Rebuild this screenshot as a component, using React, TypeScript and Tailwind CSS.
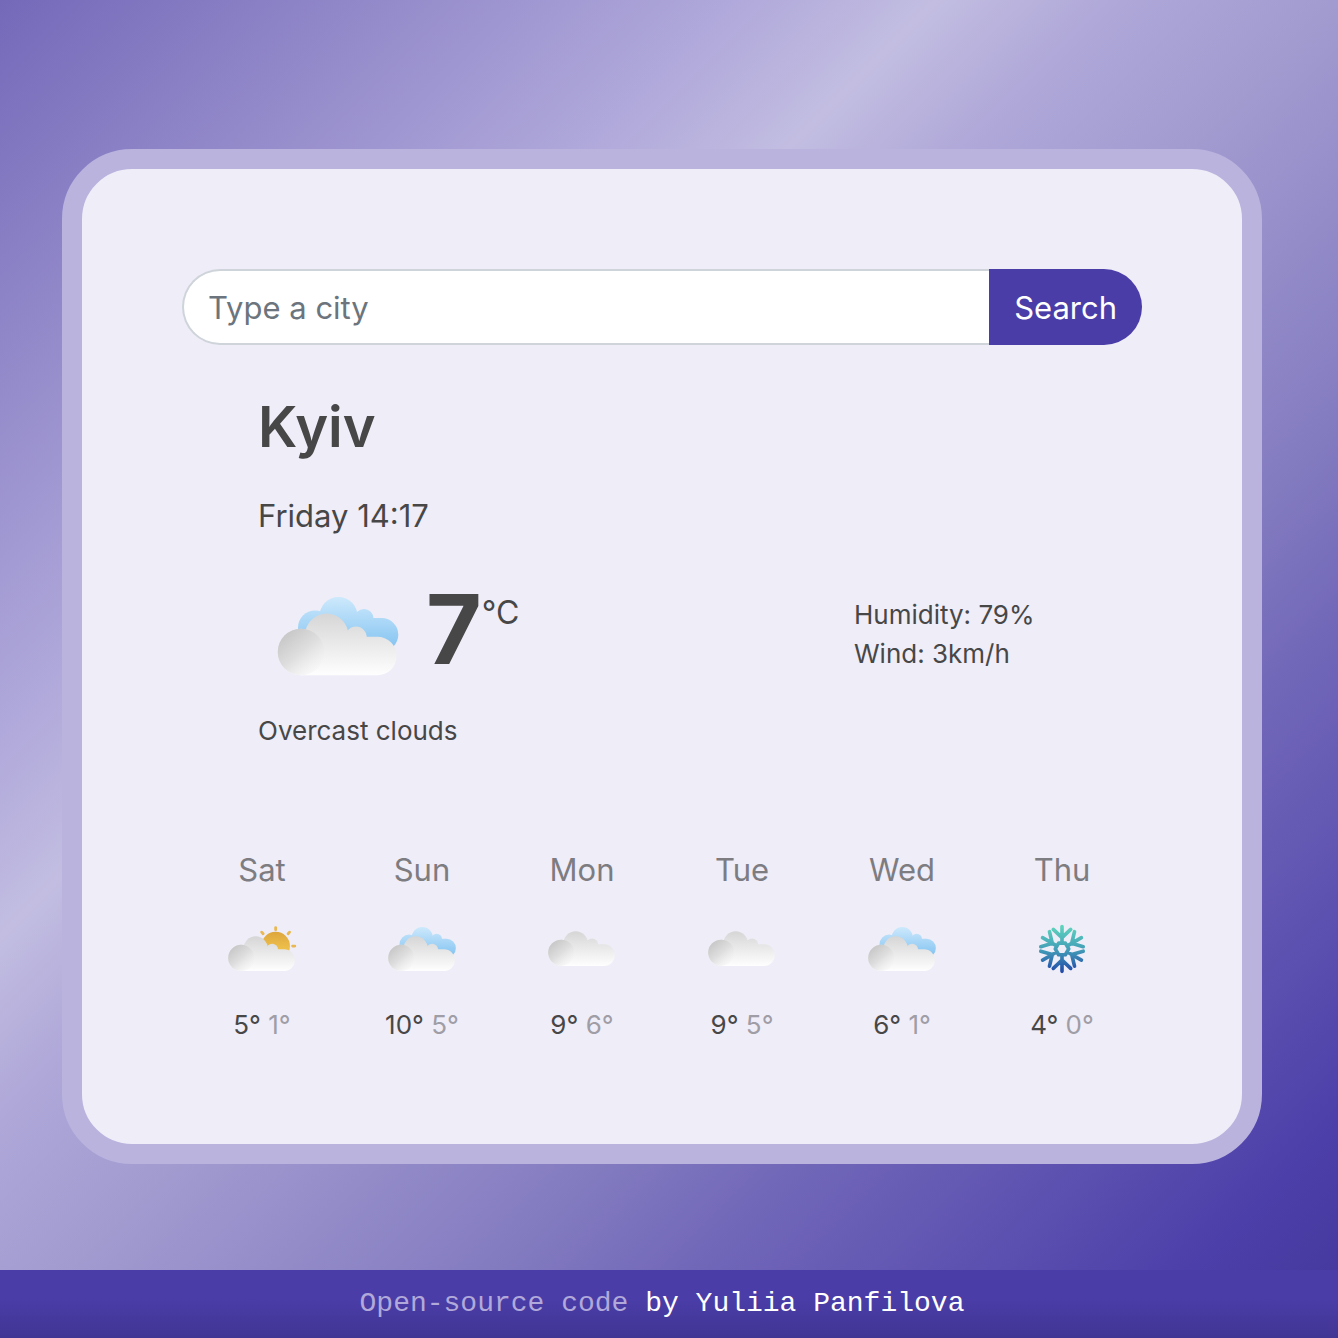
import { useId } from "react";

type IconKind = "overcast" | "cloudy" | "partly" | "snow";

function GreyCloud({ id, dy = 0 }: { id: string; dy?: number }) {
  return (
    <g transform={`translate(0 ${dy})`}>
      <defs>
        <linearGradient id={`${id}g`} gradientUnits="userSpaceOnUse" x1="0" y1="58" x2="0" y2="119">
          <stop offset="0" stopColor="#d6d6d6" />
          <stop offset="1" stopColor="#fefefe" />
        </linearGradient>
        <linearGradient id={`${id}l`} gradientUnits="userSpaceOnUse" x1="28" y1="78" x2="58" y2="114">
          <stop offset="0" stopColor="#c8c8c8" />
          <stop offset="0.5" stopColor="#dedede" />
          <stop offset="1" stopColor="#f6f6f6" stopOpacity="0.6" />
        </linearGradient>
      </defs>
      <g fill={`url(#${id}g)`}>
        <circle cx="68.7" cy="79.3" r="21.7" />
        <circle cx="98" cy="81.3" r="10.7" />
        <circle cx="43" cy="96" r="23.3" />
        <path d="M43 96L50 80.7H119.3a19.3 19.3 0 0 1 0 38.6H43z" />
      </g>
      <circle cx="43" cy="96" r="23.3" fill={`url(#${id}l)`} />
    </g>
  );
}

const point = (radius: number, degrees: number) => {
  const t = (degrees * Math.PI) / 180;
  return `${(80 + radius * Math.cos(t)).toFixed(1)} ${(80 + radius * Math.sin(t)).toFixed(1)}`;
};

const armAngles = [-90, -30, 30, 90, 150, 210];

const snowflakePath =
  armAngles
    .map((a) => `M${point(40, a)}L${point(11, a)}M${point(38, a - 24)}L${point(20, a)}L${point(38, a + 24)}`)
    .join("") + `M${armAngles.map((a) => point(12, a + 30)).join("L")}Z`;

function WeatherIcon({ kind, label, className }: { kind: IconKind; label: string; className: string }) {
  const id = useId();
  return (
    <svg viewBox="0 0 160 155" role="img" aria-label={label} className={className}>
      {kind === "overcast" && (
        <>
          <defs>
            <linearGradient id={`${id}b`} gradientUnits="userSpaceOnUse" x1="0" y1="41" x2="0" y2="93">
              <stop offset="0" stopColor="#cde9fc" />
              <stop offset="1" stopColor="#83c3f1" />
            </linearGradient>
          </defs>
          <g fill={`url(#${id}b)`}>
            <circle cx="57" cy="71.5" r="17" />
            <circle cx="80.5" cy="60" r="19" />
            <circle cx="106" cy="62.5" r="9.5" />
            <path d="M60 62H123.6a16.7 16.7 0 0 1 0 33.4H60z" />
          </g>
          <GreyCloud id={id} />
        </>
      )}
      {kind === "cloudy" && <GreyCloud id={id} dy={-9} />}
      {kind === "partly" && (
        <>
          <defs>
            <linearGradient id={`${id}s`} gradientUnits="userSpaceOnUse" x1="0" y1="45" x2="0" y2="90">
              <stop offset="0" stopColor="#dba23c" />
              <stop offset="1" stopColor="#f3c94e" />
            </linearGradient>
          </defs>
          <circle cx="104.3" cy="75" r="25.5" fill={`url(#${id}s)`} />
          <g stroke="#e9b850" strokeWidth="5" strokeLinecap="round">
            <path d="M104.300 42v4M126.500 53l2.600-2.900M134.500 75h4M82 53l-2.600-2.900" />
          </g>
          <GreyCloud id={id} />
        </>
      )}
      {kind === "snow" && (
        <>
          <defs>
            <linearGradient id={`${id}f`} gradientUnits="userSpaceOnUse" x1="0" y1="38" x2="0" y2="122">
              <stop offset="0" stopColor="#5fd6bd" />
              <stop offset="0.5" stopColor="#439fb8" />
              <stop offset="1" stopColor="#2148a8" />
            </linearGradient>
          </defs>
          <path
            fill="none"
            stroke={`url(#${id}f)`}
            strokeWidth="6.5"
            strokeLinecap="round"
            strokeLinejoin="round"
            d={snowflakePath}
          />
        </>
      )}
    </svg>
  );
}

const forecast: { day: string; kind: IconKind; label: string; max: number; min: number }[] = [
  { day: "Sat", kind: "partly", label: "Few clouds", max: 5, min: 1 },
  { day: "Sun", kind: "overcast", label: "Broken clouds", max: 10, min: 5 },
  { day: "Mon", kind: "cloudy", label: "Scattered clouds", max: 9, min: 6 },
  { day: "Tue", kind: "cloudy", label: "Scattered clouds", max: 9, min: 5 },
  { day: "Wed", kind: "overcast", label: "Broken clouds", max: 6, min: 1 },
  { day: "Thu", kind: "snow", label: "Snow", max: 4, min: 0 },
];

export default function App() {
  return (
    <div className="flex min-h-screen flex-col bg-[linear-gradient(135deg,#7469b9_0%,#b1aadb_28%,#c2bde1_35%,#aea7d8_42%,#a29bd0_50%,#837bc0_66%,#7268b9_73%,#4c3fa9_92%,#43379a_100%)] font-['Inter',sans-serif] text-[#474747]">
      <main className="flex-1 pt-[149px] pr-[14px] pb-[106px]">
        <div className="mx-auto max-w-[1200px] rounded-[70px] border-[20px] border-[#b9b3de] bg-[#efedf8] p-[100px]">
          <form className="flex h-[76px]" onSubmit={(e) => e.preventDefault()}>
            <input
              type="search"
              aria-label="City"
              placeholder="Type a city"
              className="min-w-0 flex-1 rounded-l-full border-2 border-r-0 border-[#ced4da] bg-white px-6 pt-0.5 text-[31px] outline-none placeholder:text-[#6c757d]"
            />
            <button type="submit" className="rounded-r-full bg-[#4a3da8] px-[25px] pt-0.5 text-[31px] text-white">
              Search
            </button>
          </form>

          <section className="px-[76px] pt-12">
            <h1 className="text-[56px] leading-[68px] font-semibold">Kyiv</h1>
            <p className="mt-[31px] text-[31px] leading-[48px]">Friday 14:17</p>
            <div className="mt-4 grid grid-cols-[596px_1fr]">
              <div className="flex items-center">
                <WeatherIcon kind="overcast" label="Overcast clouds" className="h-[155px] w-[160px]" />
                <span className="ml-2 self-start text-[96px] leading-[146px] font-bold">7</span>
                <span className="mb-[42px] text-[32px] leading-[48px]">°C</span>
              </div>
              <ul className="self-center text-[26px] leading-[39px]">
                <li>Humidity: 79%</li>
                <li>Wind: 3km/h</li>
              </ul>
            </div>
            <p className="text-[26px] leading-[39px]">Overcast clouds</p>
          </section>

          <section className="mt-24 grid grid-cols-6 text-center">
            {forecast.map((f) => (
              <div key={f.day} className="flex flex-col items-center">
                <h2 className="text-[31px] leading-[48px] text-[#7d7c81]">{f.day}</h2>
                <WeatherIcon kind={f.kind} label={f.label} className="mt-[10px] mb-[14px] h-[87px] w-[90px]" />
                <p className="text-[26px] leading-[39px]">
                  {f.max}° <span className="text-[#9f9da6]">{f.min}°</span>
                </p>
              </div>
            ))}
          </section>
        </div>
      </main>
      <footer className="bg-linear-to-b from-[#4a3da8] from-40% to-[#413594] py-[10px] pr-[14px] text-center font-['Liberation_Mono',monospace] text-[28px] leading-[48px] text-white">
        <a href="#source" className="text-[#b1a9d9]">
          Open-source code
        </a>{" "}
        by Yuliia Panfilova
      </footer>
    </div>
  );
}
